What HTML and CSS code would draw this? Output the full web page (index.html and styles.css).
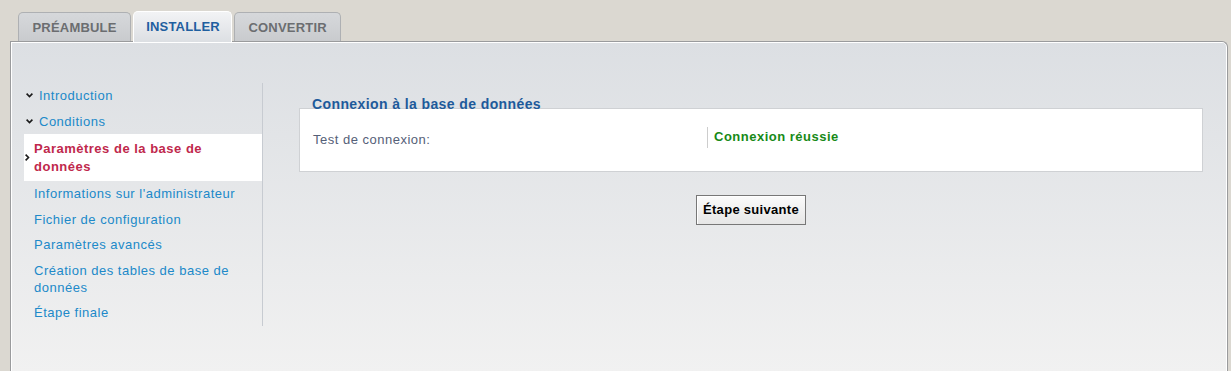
FILE: index.html
```html
<!DOCTYPE html>
<html lang="fr">
<head>
    <meta charset="UTF-8">
    <title>Installation</title>
    <link rel="stylesheet" href="styles.css">
</head>
<body>
    <div class="wrap">
        <div class="tabs">
            <div class="tab">Préambule</div>
            <div class="tab active">Installer</div>
            <div class="tab">Convertir</div>
        </div>

        <div class="panel">
            <ul class="steps">
                <li class="step done">
                    <svg class="mark-down" width="7" height="5" viewBox="0 0 7 5"><path d="M0.6 0.6L3.5 3.5L6.4 0.6" fill="none" stroke="#1a1a1a" stroke-width="1.6"/></svg>
                    <a href="#">Introduction</a>
                </li>
                <li class="step done">
                    <svg class="mark-down" width="7" height="5" viewBox="0 0 7 5"><path d="M0.6 0.6L3.5 3.5L6.4 0.6" fill="none" stroke="#1a1a1a" stroke-width="1.6"/></svg>
                    <a href="#">Conditions</a>
                </li>
                <li class="step current">
                    <svg class="mark-right" width="5" height="7" viewBox="0 0 5 7"><path d="M0.6 0.6L3.5 3.5L0.6 6.4" fill="none" stroke="#1a1a1a" stroke-width="1.6"/></svg>
                    <span>Paramètres de la base de données</span>
                </li>
                <li class="step"><a href="#">Informations sur l'administrateur</a></li>
                <li class="step"><a href="#">Fichier de configuration</a></li>
                <li class="step"><a href="#">Paramètres avancés</a></li>
                <li class="step"><a href="#">Création des tables de base de données</a></li>
                <li class="step"><a href="#">Étape finale</a></li>
            </ul>

            <div class="main">
                <h3 class="legend">Connexion à la base de données</h3>
                <div class="box">
                    <div class="row">
                        <div class="label">Test de connexion:</div>
                        <div class="value">Connexion réussie</div>
                    </div>
                </div>
                <div class="actions">
                    <button class="next">Étape suivante</button>
                </div>
            </div>
        </div>
    </div>
</body>
</html>
```

FILE: styles.css
```css
body {
    margin: 0;
    background: #dbd8d1;
    font-family: "Liberation Sans", Arial, sans-serif;
    font-size: 13px;
    letter-spacing: 0.5px;
    overflow: hidden;
}
.wrap {
    padding: 11px 3px 0 10px;
}
.tabs {
    display: flex;
    align-items: flex-end;
    gap: 2px;
    padding-left: 8px;
}
.tab {
    height: 28px;
    line-height: 29px;
    padding: 0 13.5px;
    border: 1px solid #aeb0b3;
    border-bottom: none;
    border-radius: 5px 5px 0 0;
    background: linear-gradient(to bottom, #d6d8db, #c9cbce);
    color: #6b6d70;
    font-weight: bold;
    letter-spacing: 0.2px;
    text-transform: uppercase;
}
.tab.active {
    height: 30px;
    line-height: 30px;
    padding: 0 11px 0 12px;
    margin-bottom: -1px;
    border-color: #fff;
    background: linear-gradient(to bottom, #f2f3f5, #dcdfe3);
    color: #1f5f9f;
    position: relative;
    z-index: 1;
}
.panel {
    display: flex;
    min-height: 289px;
    padding: 41px 24px 0 13px;
    border: 1px solid #9a9b9d;
    border-bottom: none;
    border-radius: 0 6px 0 0;
    box-shadow: inset 1px 1px 0 #fff, inset -1px 0 0 #fff;
    background: linear-gradient(to bottom, #dcdfe3, #f1f1f1);
}
.steps {
    list-style: none;
    margin: 0;
    padding: 0;
    width: 238px;
    flex-shrink: 0;
    align-self: flex-start;
    border-right: 1px solid #c7cbd1;
}
.step {
    display: flex;
    align-items: center;
    padding: 4.25px 12px 4.25px 10px;
    line-height: 17px;
}
.step a {
    color: #2089c9;
    text-decoration: none;
}
.step.done {
    padding-left: 2px;
}
.mark-down {
    flex-shrink: 0;
    margin-right: 6px;
}
.step.current {
    padding: 5.5px 12px 5.5px 1px;
    line-height: 18px;
    background: #fff;
    color: #c0284c;
    font-weight: bold;
}
.mark-right {
    flex-shrink: 0;
    margin-right: 4px;
}
.main {
    flex: 1;
    margin-left: 36px;
    padding-top: 13px;
}
.legend {
    position: relative;
    margin: 0 0 -4px 13px;
    font-size: 14px;
    line-height: 16px;
    letter-spacing: 0.4px;
    color: #1d5a9b;
}
.box {
    background: #fff;
    border: 1px solid #cfd1d4;
    padding: 18px 12px 23px 13px;
}
.row {
    display: flex;
    align-items: flex-start;
}
.label {
    width: 394px;
    padding-top: 5px;
    color: #556078;
}
.value {
    border-left: 1px solid #cdcdcd;
    padding-left: 6px;
    height: 21px;
    line-height: 19px;
    color: #178a17;
    font-weight: bold;
}
.actions {
    display: flex;
    justify-content: center;
    margin-top: 23px;
}
.next {
    font-family: "Liberation Sans", Arial, sans-serif;
    font-size: 13px;
    font-weight: bold;
    letter-spacing: 0.3px;
    line-height: 16px;
    padding: 6px 6px;
    color: #000;
    border: 1px solid #777;
    box-shadow: inset 1px 1px 0 #fff;
    background: linear-gradient(to bottom, #fbfbfb, #e6e6e6);
}
```
